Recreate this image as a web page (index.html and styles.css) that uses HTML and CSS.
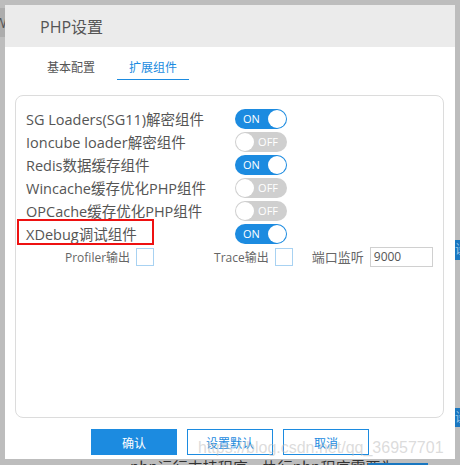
FILE: index.html
```html
<!DOCTYPE html>
<html lang="zh-CN">
<head>
  <meta charset="UTF-8" />
  <title>PHP设置</title>
  <link rel="stylesheet" href="styles.css">
</head>
<body>
  <!-- 背后的页面 -->
  <div class="page">
    <div class="page-side">W</div>
    <div class="page-mark mark-1">设</div>
    <div class="page-mark mark-2">设</div>
    <p class="page-text">php运行支持程序，执行php程序需要为</p>
    <div class="page-btn"></div>
  </div>

  <!-- 弹窗 -->
  <div class="modal">
    <div class="modal-head">PHP设置</div>

    <div class="tabs">
      <span class="tab">基本配置</span>
      <span class="tab active">扩展组件</span>
    </div>

    <div class="panel">
      <div class="row">
        <span class="label">SG Loaders(SG11)解密组件</span>
        <span class="switch on"><i>ON</i></span>
      </div>
      <div class="row">
        <span class="label">Ioncube loader解密组件</span>
        <span class="switch"><i>OFF</i></span>
      </div>
      <div class="row">
        <span class="label">Redis数据缓存组件</span>
        <span class="switch on"><i>ON</i></span>
      </div>
      <div class="row">
        <span class="label">Wincache缓存优化PHP组件</span>
        <span class="switch"><i>OFF</i></span>
      </div>
      <div class="row">
        <span class="label">OPCache缓存优化PHP组件</span>
        <span class="switch"><i>OFF</i></span>
      </div>
      <div class="row">
        <span class="label">XDebug调试组件</span>
        <span class="switch on"><i>ON</i></span>
      </div>
      <div class="sub-row">
        <span class="sub-item">Profiler输出<span class="check"></span></span>
        <span class="sub-item">Trace输出<span class="check"></span></span>
        <span class="sub-item">端口监听<span class="port">9000</span></span>
      </div>

      <!-- 红框标注 -->
      <div class="highlight"></div>
    </div>

    <div class="actions">
      <button class="btn primary">确认</button>
      <button class="btn">设置默认</button>
      <button class="btn">取消</button>
    </div>

    <div class="watermark">https://blog.csdn.net/qq_36957701</div>
  </div>
</body>
</html>
```

FILE: styles.css
```css
* {
  margin: 0;
  padding: 0;
  box-sizing: border-box;
}

html, body {
  width: 460px;
  height: 465px;
  overflow: hidden;
}

body {
  position: relative;
  background: #bdbdbd;
  font-family: "Open Sans", "Noto Sans CJK SC", sans-serif;
  color: #555;
}

/* 背后的页面 */
.page-side {
  position: absolute;
  left: 0;
  top: 8px;
  width: 5px;
  height: 29px;
  background: #adadad;
  color: #555;
  font-size: 14px;
  line-height: 29px;
  overflow: hidden;
  text-indent: -6px;
}

.page-mark {
  position: absolute;
  left: 455px;
  width: 5px;
  background: #1a77c0;
  color: #9fc7e6;
  font-size: 12px;
  overflow: hidden;
}

.mark-1 {
  top: 240px;
  height: 20px;
}

.mark-2 {
  top: 408px;
  height: 19px;
}

.page-text {
  position: absolute;
  left: 130px;
  top: 457px;
  font-size: 15px;
  line-height: 20px;
  color: #333;
  font-family: "Noto Sans CJK SC", sans-serif;
  white-space: nowrap;
}

.page-btn {
  position: absolute;
  left: 368px;
  top: 463px;
  width: 60px;
  height: 4px;
  background: #1a77c0;
}

/* 弹窗 */
.modal {
  position: absolute;
  left: 5px;
  top: 5px;
  width: 450px;
  height: 454px;
  background: #fff;
}

.modal-head {
  height: 42px;
  background: #ebebeb;
  padding-left: 35px;
  font-size: 16px;
  line-height: 44px;
  color: #555;
}

.tabs {
  display: flex;
  gap: 10px;
  padding: 11px 0 0 30px;
  height: 48px;
}

.tab {
  padding: 0 12px;
  height: 22px;
  font-size: 12px;
  line-height: 20px;
  color: #555;
}

.tab.active {
  color: #1c8be0;
  border-bottom: 1px solid #1c8be0;
}

.panel {
  position: relative;
  margin: 0 11px 0 10px;
  height: 323px;
  border: 1px solid #dcdcdc;
  border-radius: 8px;
  padding: 11px 0 0 10px;
}

.row {
  display: flex;
  align-items: center;
  height: 23px;
}

.label {
  width: 209px;
  font-size: 14.5px;
  color: #555;
  white-space: nowrap;
}

.switch {
  position: relative;
  width: 52px;
  height: 20px;
  border-radius: 10px;
  background: #cfcfcf;
}

.switch::after {
  content: "";
  position: absolute;
  top: 1px;
  left: 1px;
  width: 18px;
  height: 18px;
  border-radius: 50%;
  background: #fff;
}

.switch i {
  position: absolute;
  top: 0;
  right: 9px;
  font-style: normal;
  font-size: 11px;
  line-height: 20px;
  color: #fff;
}

.switch.on {
  background: #1c8be0;
}

.switch.on::after {
  left: auto;
  right: 1px;
}

.switch.on i {
  right: auto;
  left: 8px;
}

.sub-row {
  display: flex;
  align-items: center;
  height: 23px;
  padding-left: 39px;
  font-size: 12px;
  color: #666;
}

.sub-item {
  display: flex;
  align-items: center;
  gap: 6px;
  white-space: nowrap;
}

.sub-item:nth-child(2) {
  margin-left: 60px;
}

.sub-item:nth-child(3) {
  margin-left: 19px;
  font-size: 13px;
}

.check {
  width: 18px;
  height: 18px;
  border: 1px solid #a8d2f2;
}

.port {
  width: 63px;
  height: 20px;
  border: 1px solid #d0d0d0;
  padding-left: 3px;
  font-size: 12px;
  line-height: 18px;
  color: #555;
}

.highlight {
  position: absolute;
  left: 1px;
  top: 123px;
  width: 137px;
  height: 26px;
  border: 2px solid #ee1111;
}

.actions {
  display: flex;
  gap: 10px;
  padding: 11px 0 0 86px;
}

.btn {
  width: 86px;
  height: 26px;
  border: 1px solid #1c8be0;
  background: #fff;
  color: #1c8be0;
  font-family: "Noto Sans CJK SC", sans-serif;
  font-size: 12px;
}

.btn.primary {
  background: #1c8be0;
  color: #fff;
}

.watermark {
  position: absolute;
  left: 193px;
  top: 434px;
  font-family: "Liberation Sans", sans-serif;
  font-size: 16px;
  color: rgba(190, 190, 190, 0.55);
  white-space: nowrap;
  pointer-events: none;
}
```
